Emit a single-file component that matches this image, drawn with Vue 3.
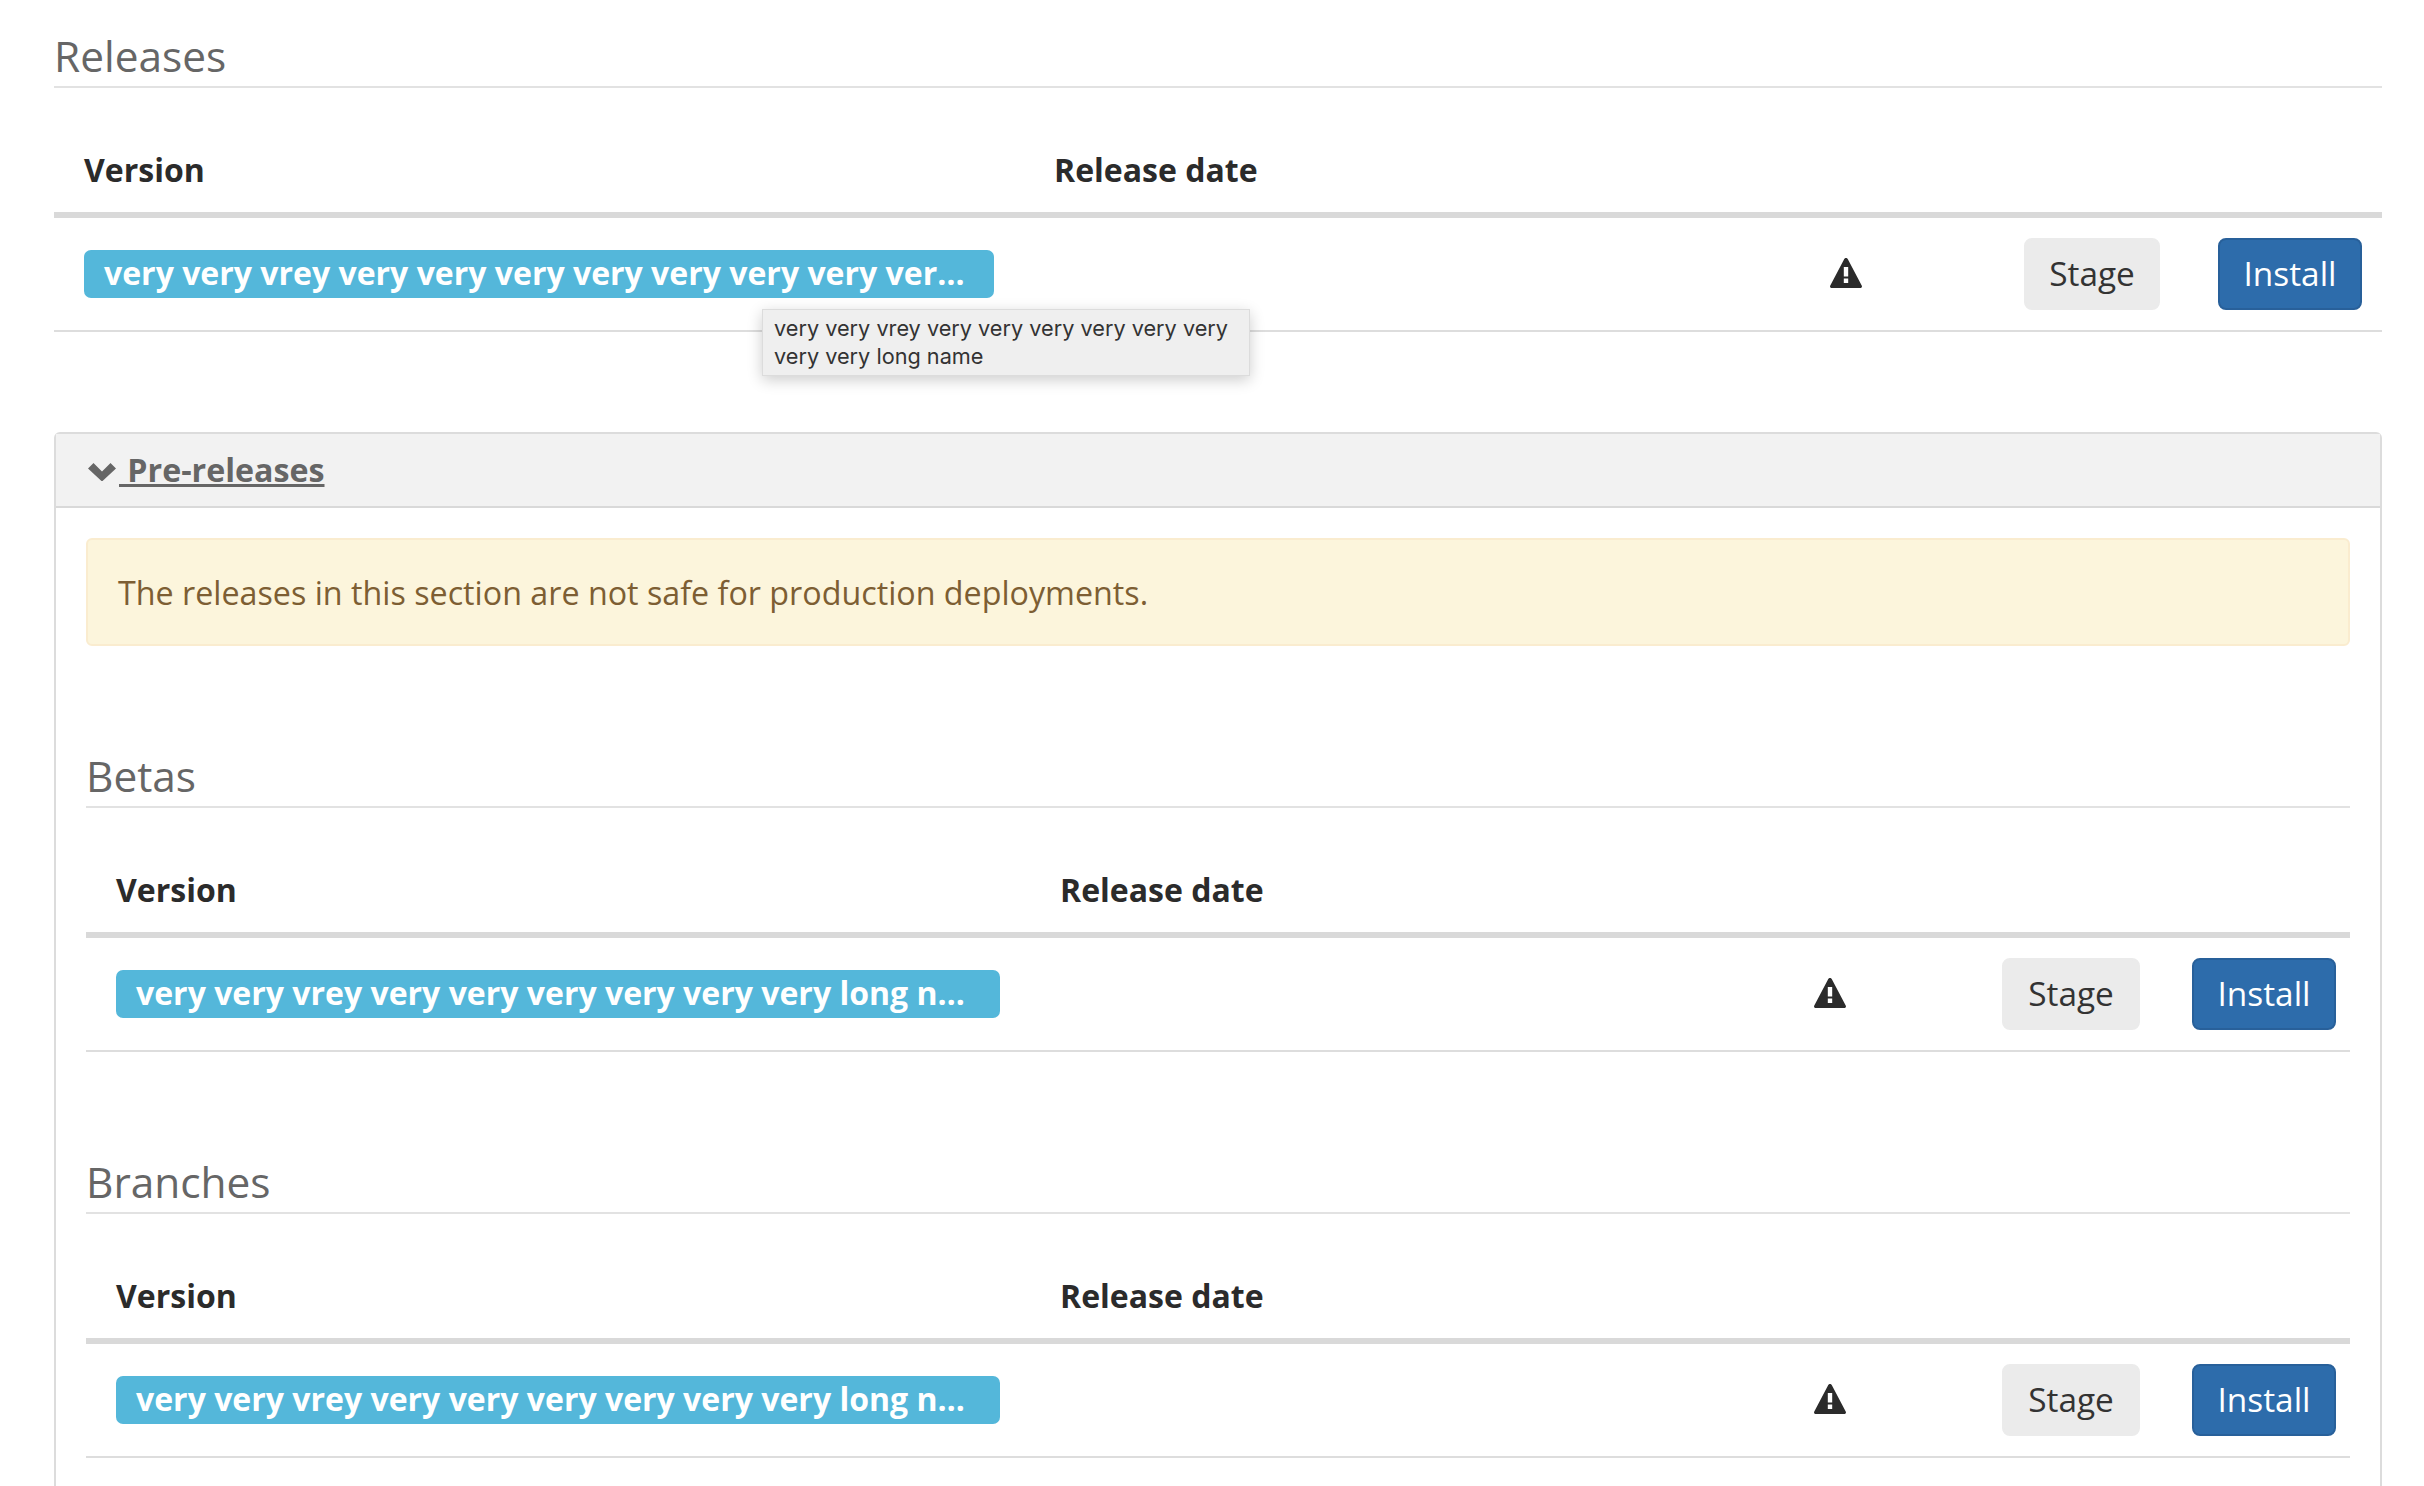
<script setup>
const sections = [
  { title: 'Betas', name: 'very very vrey very very very very very very long name' },
  { title: 'Branches', name: 'very very vrey very very very very very very long name' }
]
const topName = 'very very vrey very very very very very very very very very long name'
</script>

<template>
  <div class="page">
    <section class="sec sec-top">
      <h2 class="title">Releases</h2>
      <div class="head"><span class="c-ver">Version</span><span>Release date</span></div>
      <div class="row">
        <div class="c-ver"><span class="badge">{{ topName }}</span></div>
        <svg class="warn" viewBox="0 0 32 30"><path fill-rule="evenodd" d="M16 0c.9 0 1.6.6 2 1.4l13.7 26c.7 1.3 0 2.6-1.4 2.6H1.700C.3 30-.4 28.700.3 27.400L14 1.400C14.400.6 15.100 0 16 0zM13.800 9v9.500h4.400V9zm0 11.500V25h4.400v-4.500z"/></svg>
        <button class="btn stage">Stage</button>
        <button class="btn install">Install</button>
      </div>
      <div class="tip">very very vrey very very very very very very<br>very very long name</div>
    </section>

    <section class="panel">
      <div class="panel-head">
        <svg class="chev" viewBox="0 0 28 19"><path fill="#666" d="M0 6.500 5.500 1 14 9.500 22.500 1 28 6.500 14 19.500z"/></svg>
        <a class="panel-link"> Pre-releases</a>
      </div>
      <div class="panel-body">
        <div class="alert">The releases in this section are not safe for production deployments.</div>
        <div v-for="s in sections" :key="s.title" class="sec sec-in">
          <h2 class="title">{{ s.title }}</h2>
          <div class="head"><span class="c-ver">Version</span><span>Release date</span></div>
          <div class="row">
            <div class="c-ver"><span class="badge">{{ s.name }}</span></div>
            <svg class="warn" viewBox="0 0 32 30"><path fill-rule="evenodd" d="M16 0c.9 0 1.6.6 2 1.4l13.7 26c.7 1.3 0 2.6-1.4 2.6H1.700C.3 30-.4 28.700.3 27.400L14 1.400C14.400.6 15.100 0 16 0zM13.800 9v9.500h4.400V9zm0 11.500V25h4.400v-4.500z"/></svg>
            <button class="btn stage">Stage</button>
            <button class="btn install">Install</button>
          </div>
        </div>
      </div>
    </section>
  </div>
</template>

<style scoped>
.page {
  height: 1486px;
  overflow: hidden;
  padding: 0 42px 0 54px;
  box-sizing: border-box;
  background: #fff;
  font-family: "Open Sans", sans-serif;
  color: #2b2b2b;
}
.sec { position: relative; }
.title {
  margin: 0;
  padding: 27px 0 1px;
  font-size: 42.4px;
  line-height: 58px;
  font-weight: 400;
  color: #666;
  border-bottom: 2px solid #e2e2e2;
}
.head {
  display: flex;
  align-items: flex-end;
  height: 130px;
  box-sizing: border-box;
  padding-bottom: 21px;
  font-size: 32px;
  line-height: 42px;
  font-weight: 700;
  border-bottom: 6px solid #d9d9d9;
}
.row {
  display: flex;
  align-items: center;
  height: 114px;
  box-sizing: border-box;
  border-bottom: 2px solid #ddd;
}
.sec-top .head, .sec-top .row { padding-left: 30px; padding-right: 20px; }
.sec-in .head, .sec-in .row { padding-left: 30px; padding-right: 14px; }
.sec-top .c-ver { width: 970px; flex: none; }
.sec-in .c-ver { width: 944px; flex: none; }
.badge {
  display: block;
  box-sizing: border-box;
  height: 48px;
  padding: 0 20px;
  border-radius: 7px;
  background: #54b7da;
  color: #fff;
  font-size: 32px;
  line-height: 46px;
  font-weight: 700;
  white-space: nowrap;
  overflow: hidden;
  text-overflow: ellipsis;
}
.sec-top .badge { width: 910px; padding-right: 18px; }
.sec-in .badge { width: 884px; padding-right: 30px; }
.warn { width: 32px; height: 30px; fill: #2b2b2b; flex: none; margin-left: auto; margin-top: -2px; }
.btn {
  height: 72px;
  border-radius: 8px;
  font: 400 33.4px "Open Sans", sans-serif;
  padding: 0 0 2px;
  flex: none;
}
.stage { background: #ebebeb; border: 2px solid #ebebeb; color: #333; }
.install { background: #2d6cab; border: 2px solid #28609a; color: #fff; }
.sec-top .warn { margin-right: 162px; }
.sec-top .stage { width: 136px; margin-right: 58px; }
.sec-top .install { width: 144px; }
.sec-in .warn { margin-right: 156px; }
.sec-in .stage { width: 138px; margin-right: 52px; }
.sec-in .install { width: 144px; }
.tip {
  position: absolute;
  left: 708px;
  top: 309px;
  width: 488px;
  height: 67px;
  box-sizing: border-box;
  padding: 4px 11px;
  background: #efefef;
  border: 1px solid #dcdcdc;
  box-shadow: 0 4px 14px rgba(0, 0, 0, .2);
  font-family: Inter, sans-serif;
  font-size: 21.7px;
  line-height: 28px;
  color: #333;
  white-space: nowrap;
}
.panel {
  margin-top: 100px;
  height: 1200px;
  border: 2px solid #dcdcdc;
  border-radius: 6px;
}
.panel-head {
  display: flex;
  align-items: center;
  height: 74px;
  box-sizing: border-box;
  padding-left: 32px;
  background: #f2f2f2;
  border-bottom: 2px solid #d9d9d9;
  color: #666;
}
.chev { width: 28px; height: 19px; flex: none; margin-top: 3px; }
.panel-link {
  margin-left: 3px;
  font-size: 32.2px;
  font-weight: 700;
  text-decoration: underline;
  line-height: 44px;
  white-space: pre;
}
.panel-body { padding: 30px 30px 0; }
.alert {
  height: 108px;
  box-sizing: border-box;
  border: 2px solid #faeccf;
  border-radius: 6px;
  background: #fcf5dc;
  color: #7d5e33;
  padding: 0 30px;
  display: flex;
  align-items: center;
  font-size: 32.25px;
  margin-bottom: 74px;
}
.sec-in { margin-bottom: 74px; }
</style>
